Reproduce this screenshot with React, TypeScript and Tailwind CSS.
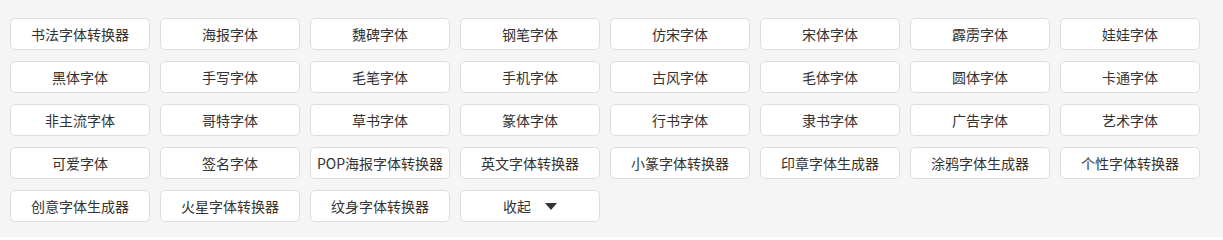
const fonts = [
  "书法字体转换器", "海报字体", "魏碑字体", "钢笔字体", "仿宋字体", "宋体字体", "霹雳字体", "娃娃字体",
  "黑体字体", "手写字体", "毛笔字体", "手机字体", "古风字体", "毛体字体", "圆体字体", "卡通字体",
  "非主流字体", "哥特字体", "草书字体", "篆体字体", "行书字体", "隶书字体", "广告字体", "艺术字体",
  "可爱字体", "签名字体", "POP海报字体转换器", "英文字体转换器", "小篆字体转换器", "印章字体生成器", "涂鸦字体生成器", "个性字体转换器",
  "创意字体生成器", "火星字体转换器", "纹身字体转换器",
];

export default function App() {
  return (
    <div className="h-[237px] w-full bg-[#f5f5f5] pl-[10px] pt-[18px] font-['Microsoft_YaHei','Noto_Sans_CJK_SC',sans-serif] text-[14px] text-[#333]">
      <div className="grid w-[1190px] grid-cols-[repeat(8,140px)] gap-x-[10px] gap-y-[11px]">
        {fonts.map((name) => (
          <a
            key={name}
            href="#"
            className="flex h-8 items-center justify-center whitespace-nowrap rounded-[5px] border border-[#dedede] bg-white"
          >
            {name}
          </a>
        ))}
        <a
          href="#"
          className="flex h-8 items-center justify-center gap-[14px] rounded-[5px] border border-[#dedede] bg-white"
        >
          <span>收起</span>
          <span className="h-0 w-0 border-x-[6px] border-t-[7px] border-x-transparent border-t-[#333]" />
        </a>
      </div>
    </div>
  );
}
